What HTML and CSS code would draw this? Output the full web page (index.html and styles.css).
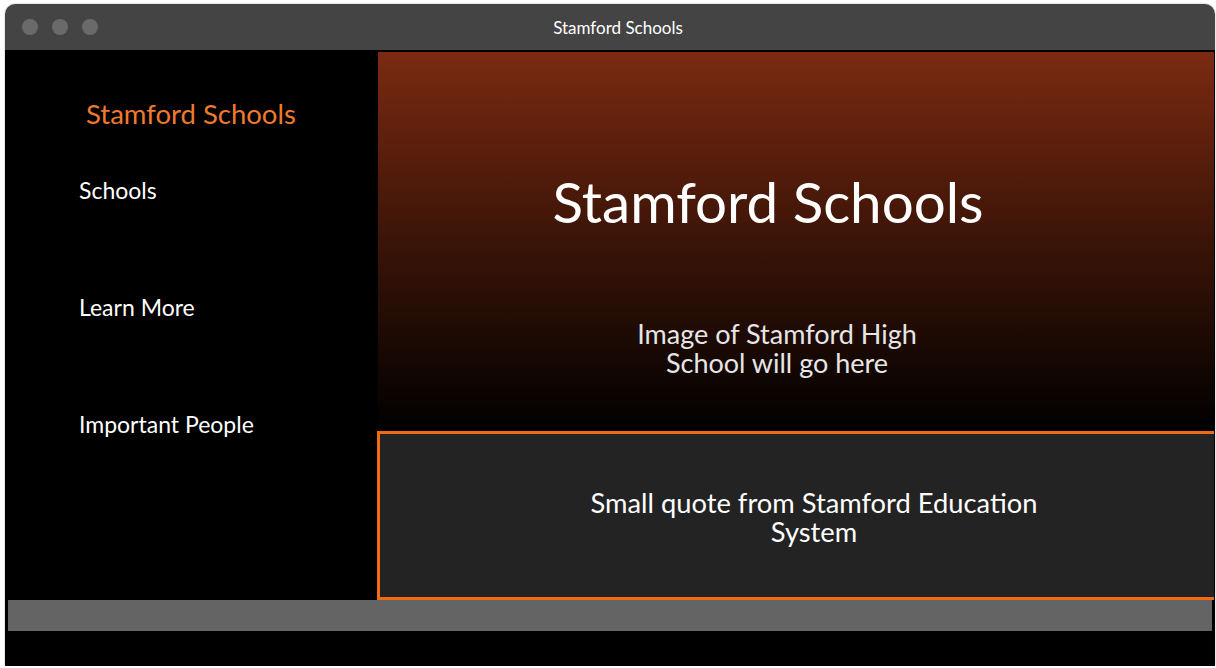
FILE: index.html
```html
<!DOCTYPE html>
<html>
<head>
<meta charset="utf-8">
<link rel="stylesheet" href="styles.css">
</head>
<body>
<div class="window">
  <div class="titlebar">
    <div class="lights"><span class="dot"></span><span class="dot"></span><span class="dot"></span></div>
    <div class="wintitle">Stamford Schools</div>
  </div>
  <div class="content">
    <div class="row">
      <nav class="sidebar">
        <div class="brand">Stamford Schools</div>
        <a class="nav-item">Schools</a>
        <a class="nav-item">Learn More</a>
        <a class="nav-item">Important People</a>
      </nav>
      <main class="main">
        <section class="hero">
          <h1 class="hero-title">Stamford Schools</h1>
          <p class="hero-img">Image of Stamford High<br>School will go here</p>
        </section>
        <section class="quote">
          <p class="quote-text">Small quote from Stamford Education<br>System</p>
        </section>
      </main>
    </div>
    <div class="footer-bar"></div>
    <div class="footer-base"></div>
  </div>
</div>
</body>
</html>
```
FILE: styles.css
```css
html, body {
  margin: 0;
  padding: 0;
  background: #ffffff;
}
body {
  font-family: Lato, "Open Sans", sans-serif;
}
.window {
  margin: 4px 0 0 5px;
  width: 1210px;
  height: 662px;
  border-radius: 10px 10px 0 0;
  overflow: hidden;
  display: flex;
  flex-direction: column;
  box-shadow: 0 0 2px rgba(0,0,0,0.35);
}
.titlebar {
  height: 46px;
  flex: none;
  background: #444444;
  display: flex;
  align-items: center;
  position: relative;
}
.lights {
  display: flex;
  gap: 14px;
  padding-left: 17px;
}
.dot {
  width: 16px;
  height: 16px;
  border-radius: 50%;
  background: #6a6a6a;
}
.wintitle {
  position: absolute;
  left: 0;
  right: 0;
  top: 0;
  bottom: 0;
  display: flex;
  align-items: center;
  justify-content: center;
  padding-left: 16px;
  color: #ffffff;
  font-size: 17px;
}
.content {
  flex: 1;
  background: #000000;
  padding: 2px 1px 0 1px;
  display: flex;
  flex-direction: column;
}
.row {
  display: flex;
  height: 548px;
  flex: none;
}
.sidebar {
  width: 372px;
  flex: none;
  display: flex;
  flex-direction: column;
  padding-top: 46px;
  box-sizing: border-box;
}
.brand {
  color: #f07a2c;
  font-size: 27.5px;
  line-height: 32px;
  padding-left: 80px;
  margin-bottom: 47px;
}
.nav-item {
  color: #ffffff;
  font-size: 23px;
  line-height: 26px;
  padding-left: 73px;
  margin-bottom: 91px;
}
.main {
  flex: 1;
  display: flex;
  flex-direction: column;
}
.hero {
  height: 379px;
  flex: none;
  background: linear-gradient(180deg, #7b2a11 0%, #3b1407 50%, #000000 100%);
  display: flex;
  flex-direction: column;
  align-items: center;
  box-sizing: border-box;
  padding-top: 116px;
}
.hero-title {
  margin: 0;
  color: #ffffff;
  font-weight: 400;
  font-size: 56.5px;
  line-height: 66px;
  margin-right: 56px;
}
.hero-img {
  margin: 85px 38px 0 0;
  color: #e6e6e6;
  font-size: 27px;
  line-height: 29px;
  text-align: center;
}
.quote {
  flex: 1;
  background: #232323;
  border: 3px solid #f26a14;
  border-right: none;
  margin-left: -1px;
  display: flex;
  justify-content: center;
  align-items: center;
}
.quote-text {
  margin: 2px 0 0 0;
  color: #ffffff;
  font-size: 27.3px;
  line-height: 29px;
  text-align: center;
  padding-left: 34px;
}
.footer-bar {
  height: 31px;
  flex: none;
  background: #646464;
  margin: 0 2px 0 2px;
}
.footer-base {
  flex: 1;
  background: #000000;
}
```
